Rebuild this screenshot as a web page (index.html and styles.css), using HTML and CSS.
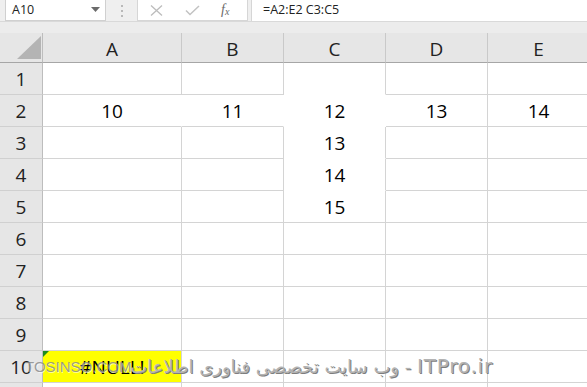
FILE: index.html
```html
<!DOCTYPE html>
<html>
<head>
<meta charset="utf-8">
<link rel="stylesheet" href="styles.css">
</head>
<body>
<div class="app">
  <div class="fbar">
    <div class="namebox"><span class="nb-text">A10</span>
      <svg class="dd" width="9" height="5" viewBox="0 0 9 5"><path d="M0 0H9L4.5 5Z" fill="#6b6b6b"/></svg>
    </div>
    <div class="dots"><i></i><i></i><i></i></div>
    <div class="fnbox">
      <svg width="13" height="11" viewBox="0 0 13 11"><path d="M1 0.5L12 10.5M12 0.5L1 10.5" stroke="#bcbcbc" stroke-width="1.3" fill="none"/></svg>
      <svg width="15" height="11" viewBox="0 0 15 11"><path d="M1 5.5L5 9.5L14 1" stroke="#c2c2c2" stroke-width="1.5" fill="none"/></svg>
      <span class="fx">f<sub>x</sub></span>
    </div>
    <div class="formula">=A2:E2 C3:C5</div>
  </div>
  <div class="strip"></div>
  <div class="sheet">
    <div class="corner"><svg width="24" height="23" viewBox="0 0 24 23"><path d="M24 0V23H0Z" fill="#b4b4b4"/></svg></div>
    <div class="ch">A</div><div class="ch">B</div><div class="ch">C</div><div class="ch">D</div><div class="ch">E</div>

    <div class="rh">1</div><div class="c"></div><div class="c"></div><div class="c nb"></div><div class="c"></div><div class="c"></div>
    <div class="rh">2</div><div class="c nr">10</div><div class="c nr">11</div><div class="c nr nb">12</div><div class="c">13</div><div class="c">14</div>
    <div class="rh">3</div><div class="c"></div><div class="c"></div><div class="c nb">13</div><div class="c"></div><div class="c"></div>
    <div class="rh">4</div><div class="c"></div><div class="c"></div><div class="c nb">14</div><div class="c"></div><div class="c"></div>
    <div class="rh">5</div><div class="c"></div><div class="c"></div><div class="c">15</div><div class="c"></div><div class="c"></div>
    <div class="rh">6</div><div class="c"></div><div class="c"></div><div class="c"></div><div class="c"></div><div class="c"></div>
    <div class="rh">7</div><div class="c"></div><div class="c"></div><div class="c"></div><div class="c"></div><div class="c"></div>
    <div class="rh">8</div><div class="c"></div><div class="c"></div><div class="c"></div><div class="c"></div><div class="c"></div>
    <div class="rh">9</div><div class="c"></div><div class="c"></div><div class="c"></div><div class="c"></div><div class="c"></div>
    <div class="rh">10</div><div class="c err"><span class="tri"></span>#NULL!</div><div class="c"></div><div class="c"></div><div class="c"></div><div class="c"></div>
    <div class="rh"></div><div class="c"></div><div class="c"></div><div class="c"></div><div class="c"></div><div class="c"></div>
  </div>
  <div class="wm-left">TOSINSO.COM</div>
  <div class="wm-right" dir="rtl"><span class="latin">ITPro.ir</span> - وب سایت تخصصی فناوری اطلاعات</div>
</div>
</body>
</html>
```
FILE: styles.css
```css
html, body {
  margin: 0;
  padding: 0;
  background: #ffffff;
  overflow: hidden;
}
.app {
  position: relative;
  width: 587px;
  height: 387px;
  overflow: hidden;
}
.fbar {
  height: 22px;
  background: #efefef;
  display: flex;
  align-items: stretch;
  border-bottom: 1px solid #d9d9d9;
  box-sizing: border-box;
}
.namebox {
  margin-left: 5px;
  width: 101px;
  background: #fff;
  border: 1px solid #d0d0d0;
  border-top: none;
  box-sizing: border-box;
  display: flex;
  align-items: center;
  justify-content: space-between;
  padding: 0 5px 0 6px;
  font-family: "Open Sans", sans-serif;
  font-size: 12.5px;
  color: #222;
}
.nb-text { position: relative; top: -1px; }
.dd { margin-top: -2px; }
.dots {
  width: 31px;
  display: flex;
  flex-direction: column;
  align-items: center;
  justify-content: center;
  gap: 3px;
}
.dots i {
  display: block;
  width: 2px;
  height: 2px;
  background: #b9b9b9;
}
.fnbox {
  width: 111px;
  background: #fff;
  border: 1px solid #d6d6d6;
  border-top: none;
  box-sizing: border-box;
  display: flex;
  align-items: center;
  padding-left: 12px;
  gap: 22px;
}
.fx {
  font-family: "Liberation Serif", serif;
  font-style: italic;
  font-size: 14px;
  color: #6a6a6a;
  margin-left: -1px;
  line-height: 1;
}
.fx sub { font-size: 10px; vertical-align: -1px; }
.formula {
  margin-left: 3px;
  flex: 1;
  background: #fff;
  border-left: 1px solid #d6d6d6;
  font-family: "Open Sans", sans-serif;
  font-size: 12.5px;
  color: #222;
  padding-left: 11px;
  line-height: 20px;
}
.strip {
  height: 11px;
  background: #ececec;
}
.sheet {
  display: grid;
  grid-template-columns: 43px 139px 102px 102px 102px 102px;
  grid-template-rows: 30px repeat(11, 32px);
  font-family: "Open Sans", sans-serif;
  font-size: 19px;
  color: #000;
}
.sheet > div {
  box-sizing: border-box;
  display: flex;
  align-items: center;
  justify-content: center;
}
.corner {
  background: #e6e6e6;
  border-right: 1px solid #bdbdbd;
  border-bottom: 1px solid #a6a6a6;
  align-items: flex-start !important;
  justify-content: flex-start !important;
  padding: 3px 0 0 17px;
}
.ch {
  background: #e6e6e6;
  border-right: 1px solid #c9c9c9;
  border-bottom: 1px solid #a6a6a6;
  color: #222;
  padding-top: 3px;
}
.rh {
  background: #e6e6e6;
  border-right: 1px solid #bdbdbd;
  border-bottom: 1px solid #d0d0d0;
  color: #222;
}
.c {
  border-right: 1px solid #d4d4d4;
  border-bottom: 1px solid #d4d4d4;
  background: #fff;
}
.c.nr { border-right-color: #fff; }
.c.nb { border-bottom-color: #fff; }
.c.err {
  background: #ffff00;
  position: relative;
}
.tri {
  position: absolute;
  left: 0;
  top: 0;
  width: 0;
  height: 0;
  border-top: 6px solid #1f8a1f;
  border-right: 6px solid transparent;
}
.wm-left {
  position: absolute;
  left: 25px;
  top: 358px;
  font-family: "Liberation Sans", sans-serif;
  font-size: 15px;
  line-height: 18px;
  color: rgba(140, 140, 140, 0.85);
  text-shadow: 1px 1px 0 rgba(255,255,255,0.6);
}
.wm-right {
  position: absolute;
  right: 94px;
  top: 355px;
  font-family: "DejaVu Sans", sans-serif;
  font-size: 18px;
  line-height: 22px;
  color: #b3b3b3;
  text-shadow: 1px 1px 0 #7d7d7d;
  white-space: nowrap;
}
.latin {
  font-size: 20px;
  letter-spacing: 0.8px;
}
```
